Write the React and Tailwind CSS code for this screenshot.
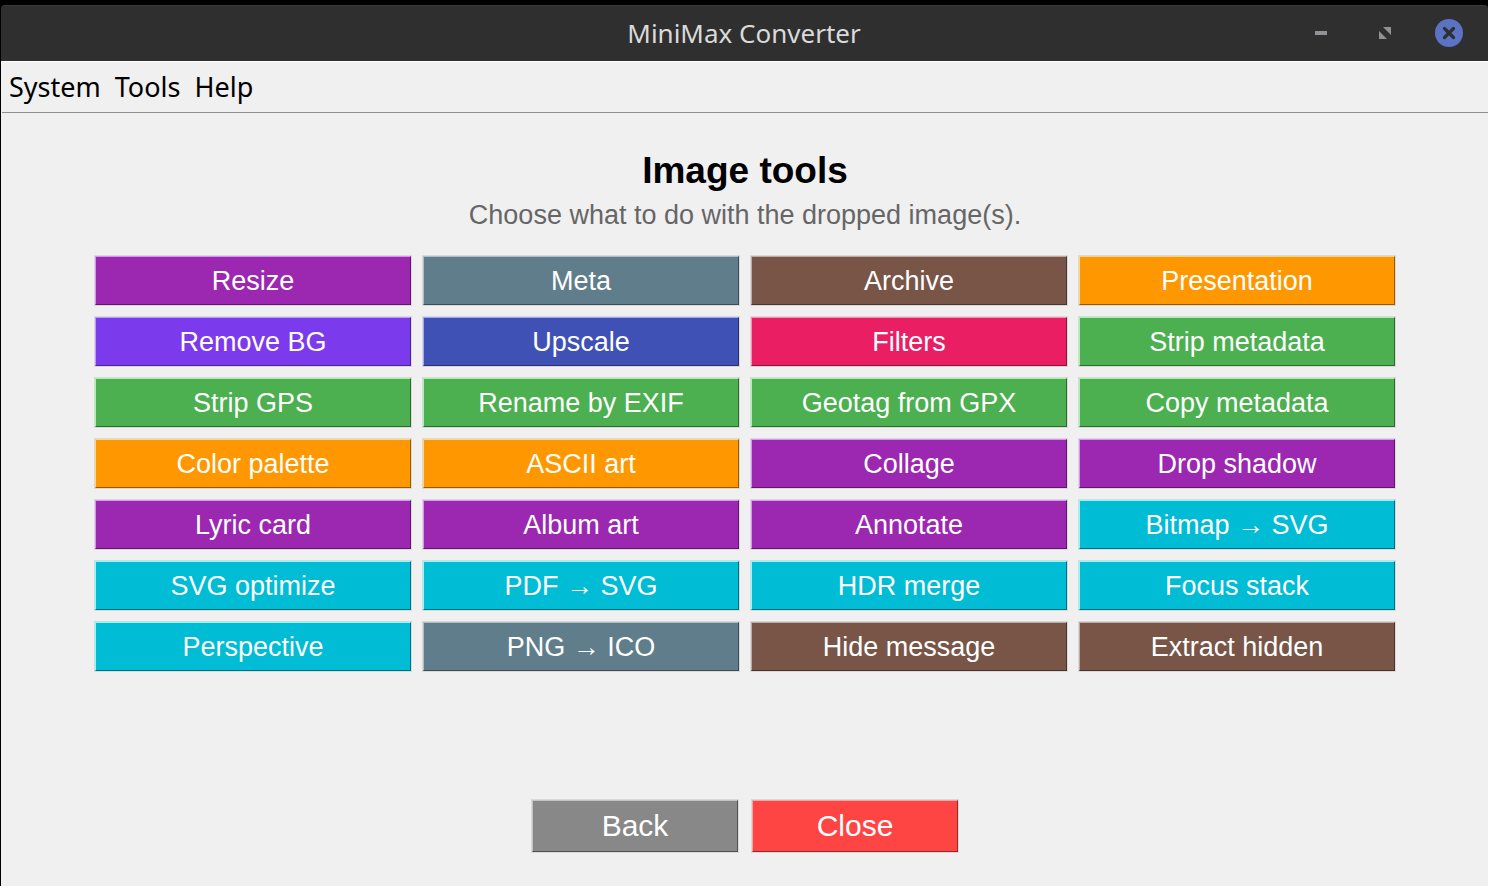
import React from "react";

const COLORS = {
  purple: "bg-[#9c27b0] border-t-[#da93f6] border-l-[#da93f6] border-r-[#5e176a] border-b-[#5e176a]",
  slate: "bg-[#607d8b] border-t-[#afbec5] border-l-[#afbec5] border-r-[#3a4b53] border-b-[#3a4b53]",
  brown: "bg-[#795548] border-t-[#bcaaa3] border-l-[#bcaaa3] border-r-[#49332b] border-b-[#49332b]",
  orange: "bg-[#ff9800] border-t-[#ffd47f] border-l-[#ffd47f] border-r-[#995b00] border-b-[#995b00]",
  violet: "bg-[#7c3aed] border-t-[#bd9cff] border-l-[#bd9cff] border-r-[#4a238e] border-b-[#4a238e]",
  indigo: "bg-[#3f51b5] border-t-[#9fa8fd] border-l-[#9fa8fd] border-r-[#26316d] border-b-[#26316d]",
  pink: "bg-[#e91e63] border-t-[#ff8eb1] border-l-[#ff8eb1] border-r-[#8c123b] border-b-[#8c123b]",
  green: "bg-[#4caf50] border-t-[#a5f5a7] border-l-[#a5f5a7] border-r-[#2e6930] border-b-[#2e6930]",
  cyan: "bg-[#00bcd4] border-t-[#7fffff] border-l-[#7fffff] border-r-[#00717f] border-b-[#00717f]",
  gray: "bg-[#888888] border-t-[#c3c3c3] border-l-[#c3c3c3] border-r-[#525252] border-b-[#525252]",
  red: "bg-[#ff4444] border-t-[#ffa1a1] border-l-[#ffa1a1] border-r-[#992929] border-b-[#992929]",
};

const MENUS = ["System", "Tools", "Help"];

const TOOLS = [
  { label: "Resize", color: "purple" },
  { label: "Meta", color: "slate" },
  { label: "Archive", color: "brown" },
  { label: "Presentation", color: "orange" },
  { label: "Remove BG", color: "violet" },
  { label: "Upscale", color: "indigo" },
  { label: "Filters", color: "pink" },
  { label: "Strip metadata", color: "green" },
  { label: "Strip GPS", color: "green" },
  { label: "Rename by EXIF", color: "green" },
  { label: "Geotag from GPX", color: "green" },
  { label: "Copy metadata", color: "green" },
  { label: "Color palette", color: "orange" },
  { label: "ASCII art", color: "orange" },
  { label: "Collage", color: "purple" },
  { label: "Drop shadow", color: "purple" },
  { label: "Lyric card", color: "purple" },
  { label: "Album art", color: "purple" },
  { label: "Annotate", color: "purple" },
  { label: "Bitmap → SVG", color: "cyan" },
  { label: "SVG optimize", color: "cyan" },
  { label: "PDF → SVG", color: "cyan" },
  { label: "HDR merge", color: "cyan" },
  { label: "Focus stack", color: "cyan" },
  { label: "Perspective", color: "cyan" },
  { label: "PNG → ICO", color: "slate" },
  { label: "Hide message", color: "brown" },
  { label: "Extract hidden", color: "brown" },
];

function RaisedButton({ color, className, children }) {
  return (
    <div className="bg-[#d9d9d9] p-px">
      <button
        type="button"
        className={`flex items-center justify-center border text-white ${COLORS[color]} ${className}`}
      >
        {children}
      </button>
    </div>
  );
}

function TitleBar() {
  return (
    <header className="grid h-14 grid-cols-[1fr_auto_1fr] items-center rounded-t border-t border-[#393939] bg-[#2f2f2f] pr-[23px] pb-[2px]">
      <span />
      <h1 className="pl-[22px] font-['Noto_Sans',sans-serif] text-[26px] leading-8 text-[#dadada]">
        MiniMax Converter
      </h1>
      <div className="flex justify-end gap-8">
        <button type="button" aria-label="Minimize" className="size-8">
          <svg viewBox="0 0 32 32" className="size-8">
            <rect x="10" y="14" width="12" height="4" fill="#929296" />
          </svg>
        </button>
        <button type="button" aria-label="Maximize" className="size-8">
          <svg viewBox="0 0 32 32" className="size-8" fill="#929296">
            <path d="M14 10h8v8z" />
            <path d="M10 14v8h8z" />
          </svg>
        </button>
        <button type="button" aria-label="Close window" className="size-8">
          <svg viewBox="0 0 32 32" className="size-8">
            <circle cx="16" cy="16" r="14" fill="#5b73c4" />
            <path
              d="M11.5 11.5l9 9M20.5 11.5l-9 9"
              stroke="#2f2f2f"
              strokeWidth="3.2"
              strokeLinecap="round"
            />
          </svg>
        </button>
      </div>
    </header>
  );
}

function App() {
  return (
    <div className="flex min-h-screen flex-col bg-black pt-[5px] pl-px font-['Liberation_Sans',Arial,sans-serif]">
      <TitleBar />

      <div className="flex flex-1 flex-col bg-[#f0f0f0] pl-px">
        <nav className="flex h-[52px] items-center gap-[14px] border-t border-b border-t-white border-b-[#8f8f8f] pl-[7px] font-['Noto_Sans',sans-serif] text-[27px] leading-9 text-black">
          {MENUS.map((menu) => (
            <button key={menu} type="button">
              {menu}
            </button>
          ))}
        </nav>

        <main className="flex flex-1 flex-col px-[92px] pt-9 pb-[33px]">
          <h2 className="text-center text-[37px] leading-[44px] font-bold text-black">
            Image tools
          </h2>
          <p className="text-center text-[27px] leading-[44px] text-[#666666]">
            Choose what to do with the dropped image(s).
          </p>

          <div className="mt-[18px] grid grid-cols-4 gap-[10px]">
            {TOOLS.map((tool) => (
              <RaisedButton
                key={tool.label}
                color={tool.color}
                className="h-[49px] w-full text-[27px] leading-8"
              >
                {tool.label}
              </RaisedButton>
            ))}
          </div>

          <div className="mt-auto flex justify-center gap-3 pt-8">
            <RaisedButton color="gray" className="h-[52px] w-[206px] text-[30px] leading-9">
              Back
            </RaisedButton>
            <RaisedButton color="red" className="h-[52px] w-[206px] text-[30px] leading-9">
              Close
            </RaisedButton>
          </div>
        </main>
      </div>
    </div>
  );
}

export default App;
